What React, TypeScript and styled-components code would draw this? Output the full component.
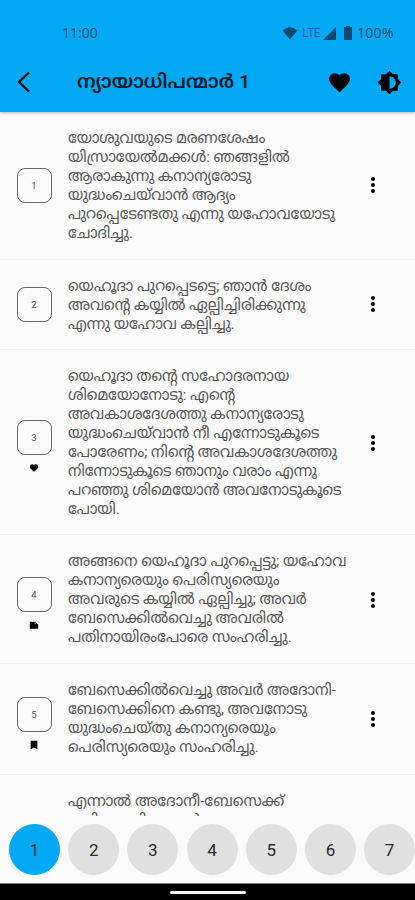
import React, { useLayoutEffect, useRef, useState } from 'react';
import styled, { createGlobalStyle } from 'styled-components';

const Global = createGlobalStyle`
  * { box-sizing: border-box; }
  body { margin: 0; background: #fafafa; }
`;

const Screen = styled.div`
  width: 415px;
  height: 900px;
  display: flex;
  flex-direction: column;
  overflow: hidden;
  background: #fafafa;
  font-family: Roboto, 'Noto Sans Malayalam', 'Noto Sans', sans-serif;
`;

const Header = styled.header`
  height: 112px;
  flex: none;
  z-index: 1;
  background: #03a9f4;
  box-shadow: 0 1px 3px rgba(0, 0, 0, 0.25);
`;

const StatusBar = styled.div`
  height: 53px;
  padding: 13px 19px 0 62px;
  display: flex;
  align-items: center;
  color: #0b4a70;
  font: 14px/18px 'Open Sans', sans-serif;
`;

const StatusIcons = styled.div`
  margin-left: auto;
  display: flex;
  align-items: center;
`;

const Network = styled.span`
  width: 18px;
  margin: 0 3px 0 4px;
  font-size: 12.5px;
  letter-spacing: -1px;
  color: #0d6699;
`;

const Battery = styled.span`
  width: 39px;
  margin-left: 4px;
  letter-spacing: 0.3px;
`;

const Toolbar = styled.div`
  height: 58px;
  padding: 0 13px 0 16px;
  display: flex;
  align-items: center;
  color: #000;
`;

const Title = styled.h1`
  flex: 1;
  margin: 0 0 0 45px;
  font-size: 19px;
  line-height: 28px;
  font-weight: 600;
  color: #041a26;
`;

const Action = styled.button<{ $gap?: number }>`
  display: flex;
  padding: 0;
  border: 0;
  background: none;
  color: #000;
  margin-left: ${(p) => p.$gap ?? 0}px;
`;

const VerseList = styled.main`
  height: 704px;
  flex: none;
  overflow: hidden;
`;

const Verse = styled.article<{ $height: number }>`
  height: ${(p) => p.$height}px;
  padding: 16px 0 0 16px;
  display: flex;
  border-bottom: 1px solid #f0f0f0;
`;

const Marker = styled.div<{ $top: number }>`
  width: 36px;
  margin: ${(p) => p.$top}px 16px 0 0;
  display: flex;
  flex: none;
  flex-direction: column;
  align-items: center;
  gap: 8px;
  color: #000;
`;

const NumberBox = styled.div`
  width: 35px;
  height: 35px;
  display: flex;
  align-items: center;
  justify-content: center;
  border: 1px solid #686868;
  border-radius: 8px;
  font-size: 9.5px;
  color: #555;
`;

const VerseText = styled.div`
  width: 280px;
  padding-top: 1px;
  font-size: 15px;
  color: #565656;
`;

const LineBox = styled.div`
  height: 19px;
  line-height: 19px;
  white-space: nowrap;
`;

const LineInner = styled.span`
  display: inline-block;
  transform-origin: 0 50%;
`;

const More = styled.button<{ $top: number }>`
  width: 8px;
  height: 20px;
  margin: ${(p) => p.$top}px 0 0 21px;
  padding: 0;
  border: 0;
  background: none;
  display: flex;
  flex-direction: column;
  align-items: center;
  justify-content: center;
  gap: 2.4px;
`;

const Dot = styled.i`
  width: 4px;
  height: 4px;
  border-radius: 50%;
  background: #000;
`;

const Chapters = styled.nav`
  height: 67px;
  flex: none;
  padding: 8px 0 0 9px;
  display: flex;
  gap: 8.2px;
  overflow: hidden;
`;

const Chapter = styled.button<{ $active: boolean }>`
  width: 51px;
  height: 51px;
  flex: none;
  padding: 0;
  border: 0;
  border-radius: 50%;
  background: ${(p) => (p.$active ? '#03a9f4' : '#e0e0e0')};
  color: #2a2a2a;
  font: 17px Roboto, sans-serif;
`;

const SystemNav = styled.footer`
  height: 17px;
  flex: none;
  display: flex;
  align-items: center;
  justify-content: center;
  padding-top: 1px;
  border-top: 1px solid #777;
  background: #000;
`;

const Pill = styled.span`
  width: 76px;
  height: 3px;
  border-radius: 2px;
  background: #f5f5f5;
`;

function FittedLine({ text, width }: { text: string; width: number }) {
  const ref = useRef<HTMLSpanElement>(null);
  const [scale, setScale] = useState(1);
  useLayoutEffect(() => {
    if (ref.current) setScale(width / ref.current.offsetWidth);
  }, [width, text]);
  return <LineInner ref={ref} style={{ transform: `scaleX(${scale})` }}>{text}</LineInner>;
}

const HeartPath = 'M12 21.35l-1.45-1.32C5.4 15.36 2 12.28 2 8.5 2 5.42 4.42 3 7.5 3c1.74 0 3.41.81 4.5 2.09C13.09 3.81 14.76 3 16.5 3 19.58 3 22 5.42 22 8.5c0 3.78-3.4 6.86-8.55 11.54L12 21.35z';

const Icon = ({ d, size }: { d: string; size: number }) => (
  <svg width={size} height={size} viewBox="0 0 24 24" fill="currentColor"><path d={d} /></svg>
);

const badges = {
  heart: HeartPath,
  note: 'M2 4h12v7h8v10H2zM15 4l7 7h-7z',
  bookmark: 'M4 2h16v20l-8-4-8 4z',
};

type VerseData = {
  height: number;
  boxTop: number;
  moreTop: number;
  badge?: keyof typeof badges;
  lines: [string, number][];
};

const verses: VerseData[] = [
  { height: 148, boxTop: 40, moreTop: 47, lines: [
    ['യോശുവയുടെ മരണശേഷം', 197], ['യിസ്രായേൽമക്കൾ: ഞങ്ങളിൽ', 222],
    ['ആരാകുന്നു കനാന്യരോടു', 183], ['യുദ്ധംചെയ്‌വാൻ ആദ്യം', 168],
    ['പുറപ്പെടേണ്ടതു എന്നു യഹോവയോടു', 267], ['ചോദിച്ചു.', 65]] },
  { height: 90, boxTop: 11, moreTop: 18, lines: [
    ['യെഹൂദാ പുറപ്പെടട്ടെ; ഞാൻ ദേശം', 243.5], ['അവന്റെ കയ്യിൽ ഏല്പിച്ചിരിക്കുന്നു', 237.5],
    ['എന്നു യഹോവ കല്പിച്ചു.', 167]] },
  { height: 185, boxTop: 54, moreTop: 67, badge: 'heart', lines: [
    ['യെഹൂദാ തന്റെ സഹോദരനായ', 221.5], ['ശിമെയോനോടു: എന്റെ', 167],
    ['അവകാശദേശത്തു കനാന്യരോടു', 236], ['യുദ്ധംചെയ്‌വാൻ നീ എന്നോടുകൂടെ', 251],
    ['പോരേണം; നിന്റെ അവകാശദേശത്തു', 269.5], ['നിന്നോടുകൂടെ ഞാനും വരാം എന്നു', 249],
    ['പറഞ്ഞു ശിമെയോൻ അവനോടുകൂടെ', 273], ['പോയി.', 52]] },
  { height: 129, boxTop: 26, moreTop: 39, badge: 'note', lines: [
    ['അങ്ങനെ യെഹൂദാ പുറപ്പെട്ടു; യഹോവ', 278], ['കനാന്യരെയും പെരിസ്യരെയും', 212],
    ['അവരുടെ കയ്യിൽ ഏല്പിച്ചു; അവർ', 238.5], ['ബേസെക്കിൽവെച്ചു അവരിൽ', 216],
    ['പതിനായിരംപോരെ സംഹരിച്ചു.', 223.5]] },
  { height: 111, boxTop: 17, moreTop: 29, badge: 'bookmark', lines: [
    ['ബേസെക്കിൽവെച്ചു അവർ അദോനി-', 268], ['ബേസെക്കിനെ കണ്ടു, അവനോടു', 239],
    ['യുദ്ധംചെയ്തു കനാന്യരെയും', 207.5], ['പെരിസ്യരെയും സംഹരിച്ചു.', 190.5]] },
];

export default function App() {
  return (
    <>
      <Global />
      <Screen>
        <Header>
          <StatusBar>
            <span>11:00</span>
            <StatusIcons>
              <svg width="16" height="13" viewBox="0 0 16 13" fill="#0b4a70"><path d="M0.5 3.5Q8-3 15.5 3.5L8 12.5z" /></svg>
              <Network>LTE</Network>
              <svg width="13" height="13" viewBox="0 0 13 13" fill="#0b4a70"><path d="M13 0v13H0z" /></svg>
              <svg width="17" height="14" viewBox="0 0 17 14" fill="#0b4a70"><path d="M8 1h2V0h4v1h2v13H8z" /></svg>
              <Battery>100%</Battery>
            </StatusIcons>
          </StatusBar>
          <Toolbar>
            <Action aria-label="Back">
              <svg width="16" height="22" viewBox="0 0 16 22" fill="none" stroke="currentColor" strokeWidth="2.2"><path d="M13 1.5L3 11l10 9.5" /></svg>
            </Action>
            <Title><FittedLine text="ന്യായാധിപന്മാർ 1" width={173} /></Title>
            <Action aria-label="Favourite"><Icon d={HeartPath} size={25} /></Action>
            <Action aria-label="Brightness" $gap={25}>
              <svg width="25" height="25" viewBox="0 0 24 24" fill="currentColor">
                <path d="M20 15.31L23.31 12 20 8.69V4h-4.69L12 .69 8.69 4H4v4.69L.69 12 4 15.31V20h4.69L12 23.31 15.31 20H20v-4.69zM12 18V6c3.31 0 6 2.69 6 6s-2.69 6-6 6z" />
              </svg>
            </Action>
          </Toolbar>
        </Header>
        <VerseList>
          {verses.map((v, i) => (
            <Verse key={i} $height={v.height}>
              <Marker $top={v.boxTop}>
                <NumberBox>{i + 1}</NumberBox>
                {v.badge && <Icon d={badges[v.badge]} size={10} />}
              </Marker>
              <VerseText>
                {v.lines.map(([text, width]) => (
                  <LineBox key={text}><FittedLine text={text} width={width} /></LineBox>
                ))}
              </VerseText>
              <More $top={v.moreTop} aria-label="More"><Dot /><Dot /><Dot /></More>
            </Verse>
          ))}
          <Verse $height={120}>
            <Marker $top={40} />
            <VerseText>
              <LineBox><FittedLine text="എന്നാൽ അദോനീ-ബേസെക്ക്" width={216} /></LineBox>
              <LineBox><FittedLine text="ഓടിപ്പോയി; അവർ അവനെ" width={196} /></LineBox>
            </VerseText>
          </Verse>
        </VerseList>
        <Chapters>
          {[1, 2, 3, 4, 5, 6, 7].map((n) => <Chapter key={n} $active={n === 1}>{n}</Chapter>)}
        </Chapters>
        <SystemNav><Pill /></SystemNav>
      </Screen>
    </>
  );
}
